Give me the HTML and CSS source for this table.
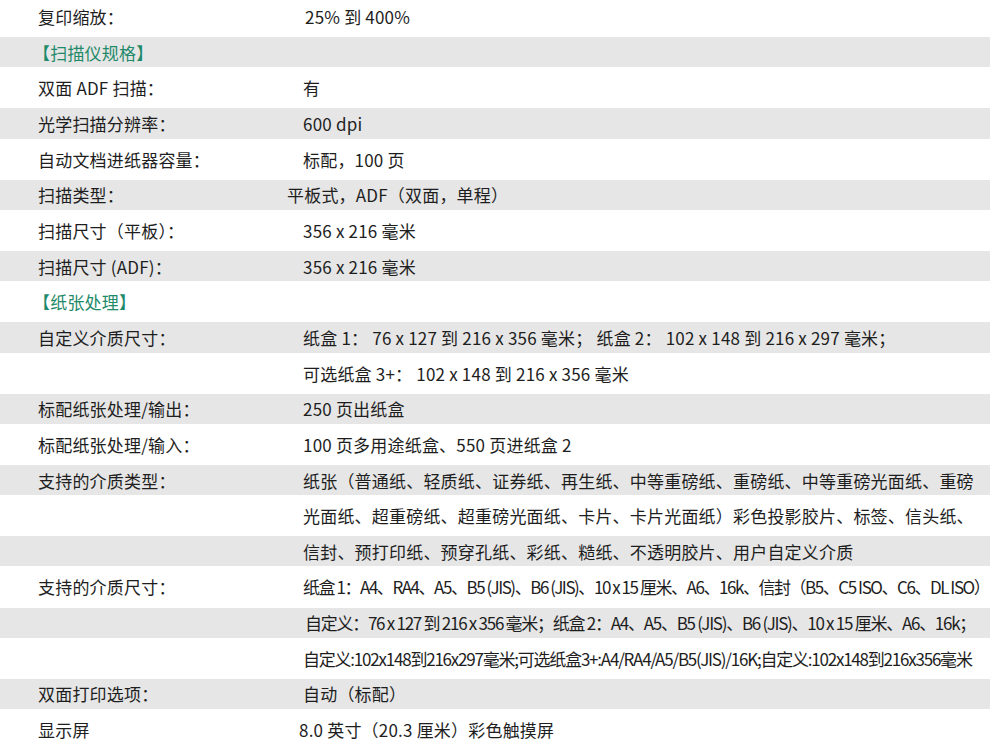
FILE: index.html
```html
<!DOCTYPE html>
<html lang="zh-CN">
<head>
<meta charset="utf-8">
<title>规格</title>
<link rel="stylesheet" href="styles.css">
</head>
<body>
<div class="spec">
  <div class="row"><div class="label">复印缩放：</div><div class="value v-shift1">25% 到 400%</div></div>
  <div class="row"><div class="label section">【扫描仪规格】</div></div>
  <div class="row"><div class="label">双面 ADF 扫描：</div><div class="value">有</div></div>
  <div class="row"><div class="label">光学扫描分辨率：</div><div class="value">600 dpi</div></div>
  <div class="row"><div class="label">自动文档进纸器容量：</div><div class="value">标配，100 页</div></div>
  <div class="row"><div class="label">扫描类型：</div><div class="value v-left">平板式，ADF（双面，单程）</div></div>
  <div class="row"><div class="label">扫描尺寸（平板）：</div><div class="value">356 x 216 毫米</div></div>
  <div class="row"><div class="label">扫描尺寸 (ADF)：</div><div class="value">356 x 216 毫米</div></div>
  <div class="row"><div class="label section">【纸张处理】</div></div>
  <div class="row"><div class="label">自定义介质尺寸：</div><div class="value">纸盒 1：&nbsp;76 x 127 到 216 x 356 毫米；&nbsp;纸盒 2：&nbsp;102 x 148 到 216 x 297 毫米；</div></div>
  <div class="row"><div class="label"></div><div class="value">可选纸盒 3+：&nbsp;102 x 148 到 216 x 356 毫米</div></div>
  <div class="row"><div class="label">标配纸张处理/输出：</div><div class="value">250 页出纸盒</div></div>
  <div class="row"><div class="label">标配纸张处理/输入：</div><div class="value">100 页多用途纸盒、550 页进纸盒 2</div></div>
  <div class="row"><div class="label">支持的介质类型：</div><div class="value">纸张（普通纸、轻质纸、证券纸、再生纸、中等重磅纸、重磅纸、中等重磅光面纸、重磅</div></div>
  <div class="row"><div class="label"></div><div class="value">光面纸、超重磅纸、超重磅光面纸、卡片、卡片光面纸）彩色投影胶片、标签、信头纸、</div></div>
  <div class="row"><div class="label"></div><div class="value">信封、预打印纸、预穿孔纸、彩纸、糙纸、不透明胶片、用户自定义介质</div></div>
  <div class="row"><div class="label">支持的介质尺寸：</div><div class="value tight1">纸盒 1：A4、RA4、A5、B5 (JIS)、B6 (JIS)、10 x 15 厘米、A6、16k、信封（B5、C5 ISO、C6、DL ISO）</div></div>
  <div class="row"><div class="label"></div><div class="value tight2">自定义：76 x 127 到 216 x 356 毫米；纸盒 2：A4、A5、B5 (JIS)、B6 (JIS)、10 x 15 厘米、A6、16k；</div></div>
  <div class="row"><div class="label"></div><div class="value tight3">自定义:102x148到216x297毫米;可选纸盒3+:A4/RA4/A5/B5(JIS)/16K;自定义:102x148到216x356毫米</div></div>
  <div class="row"><div class="label">双面打印选项：</div><div class="value">自动（标配）</div></div>
  <div class="row"><div class="label">显示屏</div><div class="value v-shift-4">8.0 英寸（20.3 厘米）彩色触摸屏</div></div>
</div>
</body>
</html>
```
FILE: styles.css
```css
html, body {
  margin: 0;
  padding: 0;
  background: #ffffff;
}
body {
  font-family: "Noto Sans CJK SC", "Noto Sans", sans-serif;
  font-size: 17px;
  letter-spacing: 0.2px;
  color: #1e1e1e;
  overflow: hidden;
}
.spec {
  padding-top: 1.35px;
  width: 990px;
}
.row {
  display: flex;
  align-items: center;
  height: 30.3px;
  margin-bottom: 5.37px;
  white-space: nowrap;
}
.row:nth-child(2n) {
  background: #e6e6e6;
}
.label {
  box-sizing: border-box;
  width: 303px;
  flex: none;
  padding-left: 38px;
}
.section {
  color: #1f8a6a;
  padding-left: 33px;
}
.value {
  flex: none;
}
.v-shift1 { margin-left: 2px; }
.v-left { margin-left: -16px; }
.v-shift-4 { margin-left: -4px; }
.tight1 { letter-spacing: -1.45px; }
.tight2 { letter-spacing: -1.27px; margin-left: 2px; }
.tight3 { letter-spacing: -1.22px; }
```
